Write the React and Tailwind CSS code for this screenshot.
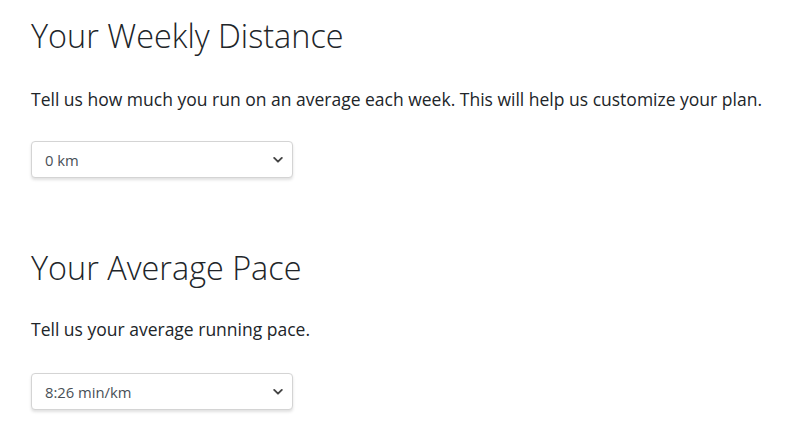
import React, { useState } from "react";

function Chevron() {
  return (
    <svg
      className="pointer-events-none absolute right-[10px] top-1/2 -translate-y-1/2"
      width="10"
      height="7"
      viewBox="0 0 10 7"
      fill="none"
    >
      <path d="M1.2 1.4 L5 5.2 L8.8 1.4" stroke="#444" strokeWidth="1.9" strokeLinecap="round" strokeLinejoin="round" />
    </svg>
  );
}

function Dropdown({ value, options, onChange }) {
  return (
    <div className="relative w-[262px]">
      <select
        value={value}
        onChange={(e) => onChange(e.target.value)}
        className="h-[37px] w-full appearance-none rounded-[4px] border border-[#d4d4d4] bg-white pl-[13px] pr-8 text-[14.8px] text-[#495057] shadow-[0_2px_3px_rgba(0,0,0,0.12)] outline-none"
      >
        {options.map((o) => (
          <option key={o} value={o}>
            {o}
          </option>
        ))}
      </select>
      <Chevron />
    </div>
  );
}

export default function App() {
  const [distance, setDistance] = useState("0 km");
  const [pace, setPace] = useState("8:26 min/km");

  const distances = ["0 km", "5 km", "10 km", "20 km", "30 km", "40 km", "50+ km"];
  const paces = ["4:00 min/km", "5:00 min/km", "6:00 min/km", "7:00 min/km", "8:26 min/km", "9:00 min/km"];

  return (
    <div className="min-h-screen bg-white px-[31px] pt-[16px] font-['Open_Sans',sans-serif] text-[#212529]">
      {/* weekly distance */}
      <h1 className="text-[32.4px] font-light leading-[1.2]">Your Weekly Distance</h1>
      <p className="mt-[31px] text-[17.5px] leading-[1.5]">
        Tell us how much you run on an average each week. This will help us customize your plan.
      </p>
      <div className="mt-[29px]">
        <Dropdown value={distance} options={distances} onChange={setDistance} />
      </div>

      {/* average pace */}
      <h1 className="mt-[70px] text-[32.4px] font-light leading-[1.2]">Your Average Pace</h1>
      <p className="mt-[29px] text-[17.5px] leading-[1.5]">Tell us your average running pace.</p>
      <div className="mt-[31px]">
        <Dropdown value={pace} options={paces} onChange={setPace} />
      </div>
    </div>
  );
}
